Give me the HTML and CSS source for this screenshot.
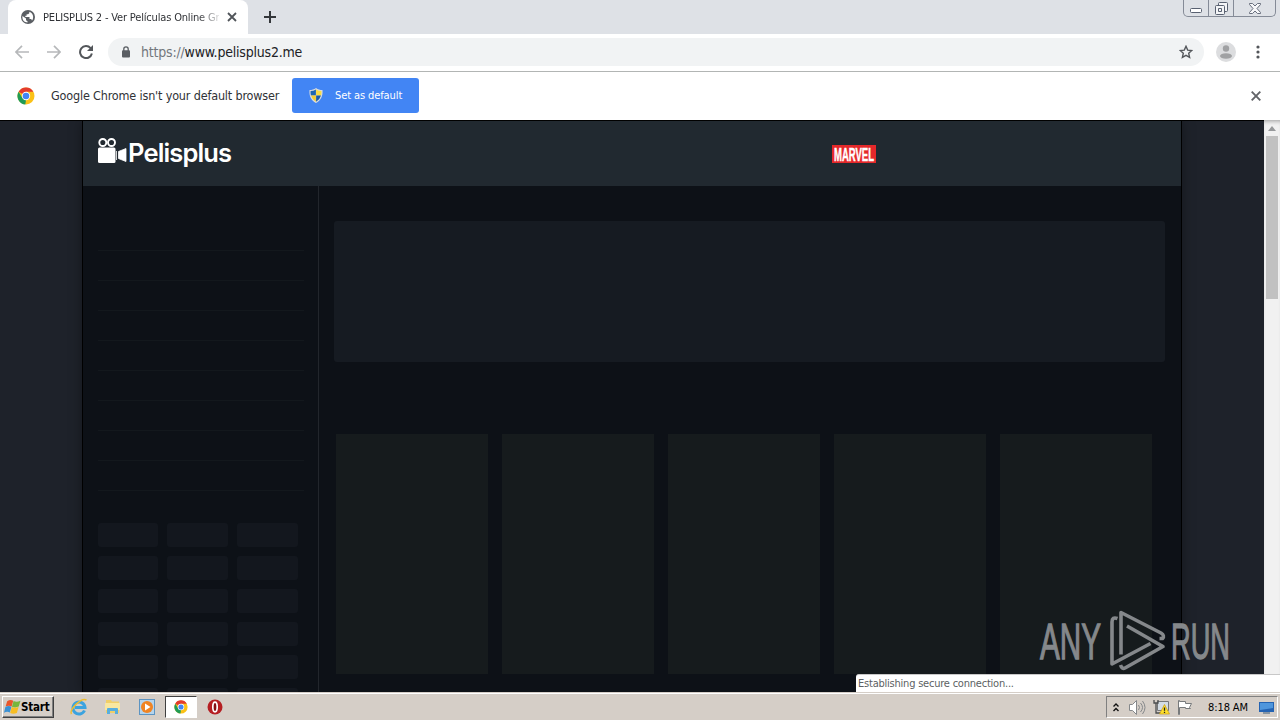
FILE: index.html
```html
<!DOCTYPE html>
<html lang="en">

<head>
  <meta charset="utf-8">
  <title>PELISPLUS 2 - Ver Películas Online Gratis</title>
  <link rel="stylesheet" href="styles.css">
</head>

<body>
  <svg class="defs" width="0" height="0">
    <symbol id="chrome" viewBox="0 0 18 18">
      <circle cx="9" cy="9" r="8.5" fill="#fbc116" />
      <path d="M9 9 1.6 4.7A8.5 8.5 0 0 1 16.4 4.8H9z" fill="#e33b2e" />
      <path d="M1.6 4.7 5.4 11 9 13 8.3 17.5A8.5 8.5 0 0 1 1.6 4.7z" fill="#209b55" />
      <circle cx="9" cy="9" r="4.2" fill="#fff" />
      <circle cx="9" cy="9" r="3.3" fill="#4285f4" />
    </symbol>
  </svg>
  <div class="screen">
    <div class="tabstrip">
      <div class="tab">
        <svg width="14" height="14" viewBox="0 0 14 14">
          <circle cx="7" cy="7" r="7" fill="#5a5e63" />
          <path d="M1.500 6 5 8.500v1.700l1.500 1v1.300C3.200 12.500.8 9.700 1.500 6zM8.300 1.700v1.500L7 4.300H5.600v1.500H4.300v1.300h4.200v2h1.700l.8 1.500c1.900-2.400 1.900-7.200-2.700-8.900z" fill="#fff" />
        </svg>
        <span class="tab-title">PELISPLUS 2 - Ver Películas Online Gr</span>
        <svg class="tab-close" width="10" height="10" viewBox="0 0 10 10">
          <path d="m1 1 8 8M9 1 1 9" stroke="#505459" stroke-width="1.8" />
        </svg>
      </div>
      <svg class="new-tab" width="12" height="12" viewBox="0 0 12 12">
        <path d="M6 0v12M0 6h12" stroke="#34373b" stroke-width="2" />
      </svg>
      <div class="window-buttons">
        <div class="wb min"><svg width="12" height="5" viewBox="0 0 12 5"><rect x=".5" y=".5" width="11" height="4" rx="1" fill="#fff" stroke="#596171" /></svg></div>
        <div class="wb restore"><svg width="13" height="13" viewBox="0 0 13 13"><g fill="#f4f5f7" stroke="#596171"><rect x="3.5" y=".5" width="9" height="9" rx="1" /><rect x=".5" y="3.5" width="9" height="9" rx="1" /><path d="M3.5 6.5h3v3h-3z" /></g></svg></div>
        <div class="wb close"><svg width="12" height="11" viewBox="0 0 12 11"><path d="M.5.5h3L6 3 8.500.5h3v1L8 5.500l3.500 4v1h-3L6 8l-2.500 2.500h-3v-1L4 5.500l-3.500-4z" fill="#f7f7f9" stroke="#596171" stroke-width=".9" /></svg></div>
      </div>
    </div>

    <div class="toolbar">
      <svg class="back" width="14" height="14" viewBox="0 0 14 14"><path d="M14 7H1.500M7 .8.9 7 7 13.200" fill="none" stroke="#b6b8ba" stroke-width="1.700" /></svg>
      <svg class="forward" width="14" height="14" viewBox="0 0 14 14"><path d="M0 7h12.500M7 .8 13.100 7 7 13.200" fill="none" stroke="#b6b8ba" stroke-width="1.700" /></svg>
      <svg class="reload" width="14" height="14" viewBox="0 0 14 14"><path d="M11.600 3.100A6 6 0 1 0 12.900 8.500" fill="none" stroke="#53565a" stroke-width="2" /><path d="M14 0v6H8z" fill="#53565a" /></svg>
      <div class="omnibox">
        <svg width="8" height="12" viewBox="0 0 8 12"><path d="M1.800 5V3a2.200 2.200 0 0 1 4.400 0v2" fill="none" stroke="#5a5e63" stroke-width="1.300" /><rect y="4.200" width="8" height="7.300" rx="1" fill="#5a5e63" /></svg>
        <span class="url"><span class="scheme">https://</span>www.pelisplus2.me</span>
        <svg class="star" width="14" height="14" viewBox="0 0 14 14"><path d="m7 1.300 1.700 3.800 4.100.4-3.100 2.800.9 4.100L7 10.300l-3.600 2.100.9-4.100L1.200 5.500l4.100-.4z" fill="none" stroke="#53565a" stroke-width="1.400" /></svg>
      </div>
      <svg class="avatar" width="20" height="20" viewBox="0 0 20 20"><circle cx="10" cy="10" r="10" fill="#dcdddf" /><circle cx="10" cy="6.500" r="3.200" fill="#a0a1a3" /><ellipse cx="10" cy="14" rx="6" ry="2.800" fill="#a0a1a3" /></svg>
      <svg class="menu" width="4" height="14" viewBox="0 0 4 14"><g fill="#53565a"><circle cx="2" cy="2" r="1.600" /><circle cx="2" cy="7" r="1.600" /><circle cx="2" cy="12" r="1.600" /></g></svg>
    </div>

    <div class="infobar">
      <svg width="18" height="18"><use href="#chrome" /></svg>
      <span class="info-text">Google Chrome isn't your default browser</span>
      <div class="set-default">
        <svg width="14" height="15" viewBox="0 0 14 15">
          <path d="M7 0C5 1.500 3 2 .5 2 0 8 2 12.500 7 15c5-2.500 7-7 6.500-13C11 2 9 1.500 7 0z" fill="#d9dce0" />
          <path d="M6.900 1.500Q4.500 3 1.600 3 1.300 5.500 1.900 7.500h5z" fill="#1d66b4" />
          <path d="M7.100 1.500Q9.500 3 12.400 3q.3 2.500-.3 4.500h-5z" fill="#f8dc45" />
          <path d="M2 7.500q1.200 4.200 4.900 6.200V7.500z" fill="#f3cd31" />
          <path d="M12 7.500q-1.200 4.200-4.900 6.200V7.500z" fill="#1b5ba6" />
        </svg>
        <span>Set as default</span>
      </div>
      <svg class="info-close" width="10" height="10" viewBox="0 0 10 10"><path d="m.7.7 8.600 8.600M9.300.7.7 9.300" stroke="#626468" stroke-width="1.900" /></svg>
    </div>

    <div class="viewport">
      <div class="page">
        <div class="site">
          <div class="site-header">
            <div class="logo">
              <svg width="29" height="26" viewBox="0 0 29 26">
                <g fill="none" stroke="#fff" stroke-width="1.900"><circle cx="4.800" cy="4.500" r="3.500" /><circle cx="13.500" cy="4.500" r="3.500" /></g>
                <rect y="9.500" width="17.500" height="15.500" rx="1.500" fill="#fff" />
                <path d="M18.500 13v9M28 10.500v13L20.500 20.500v-7z" fill="#fff" stroke="#fff" stroke-width=".8" />
              </svg>
              <span>Pelisplus</span>
            </div>
            <div class="marvel">
              <svg width="44" height="18" viewBox="0 0 44 18"><rect width="44" height="18" fill="#e5282a" /><text x="2" y="16" textLength="40" lengthAdjust="spacingAndGlyphs">MARVEL</text></svg>
            </div>
          </div>
          <div class="columns">
            <div class="sidebar">
              <ul class="genres">
                <li></li><li></li><li></li><li></li><li></li><li></li><li></li><li></li><li></li>
              </ul>
              <div class="years">
                <i></i><i></i><i></i>
                <i></i><i></i><i></i>
                <i></i><i></i><i></i>
                <i></i><i></i><i></i>
                <i></i><i></i><i></i>
                <i></i><i></i><i></i>
              </div>
            </div>
            <div class="main">
              <div class="banner"></div>
              <div class="posters">
                <div></div><div></div><div></div><div></div><div></div>
              </div>
            </div>
          </div>
        </div>
      </div>
      <div class="scrollbar">
        <svg width="8" height="5" viewBox="0 0 8 5"><path d="M4 0 8 5H0z" fill="#96989a" /></svg>
        <div class="thumb"></div>
      </div>
      <div class="watermark">
        <svg width="204" height="64" viewBox="0 0 204 64">
          <text x="2" y="47.200" textLength="61" lengthAdjust="spacingAndGlyphs" transform="scale(1 1.080)">ANY</text>
          <g fill="none" stroke="#85888b" stroke-width="3.600" stroke-linejoin="round">
            <path d="M79.500 10.500Q74 8.500 74 14v42l38.500-20.500" />
            <path d="M83 46.500V4.500L123 25q4 2.500 1.500 5.500h-3" />
            <path d="m89 18 36 20.500L87 60q-3 1.500-4.500-3" />
          </g>
          <text x="133" y="47.200" textLength="59" lengthAdjust="spacingAndGlyphs" transform="scale(1 1.080)">RUN</text>
        </svg>
      </div>
      <div class="status">Establishing secure connection...</div>
    </div>

    <div class="taskbar">
      <div class="start">
        <svg width="17" height="16" viewBox="0 0 16 15">
          <path d="M3 2q3-2 5.700-.5L7.200 7Q4.500 5.700 1.500 7z" fill="#e9562b" />
          <path d="M9 1.800q3 1.500 6.500-.2l-1.600 5.500q-3.300 1.500-6.400.1z" fill="#77b63c" />
          <path d="M1.300 7.400q3-1.400 5.700-.1l-1.500 5.400Q3 11.400 0 12.800z" fill="#3b91d4" />
          <path d="M7.300 7.600q3 1.400 6.400-.1l-1.600 5.600q-3.300 1.500-6.300.1z" fill="#f7bd23" />
        </svg>
        <span>Start</span>
      </div>
      <div class="launch">
        <svg width="18" height="18" viewBox="0 0 18 18">
          <path d="M14.500 12.500A6 6 0 1 1 15 9.500H5" fill="none" stroke="#3ba3df" stroke-width="3" />
          <path d="M1.500 16C-1 12 11-1 16.500 2" fill="none" stroke="#edbd32" stroke-width="1.500" />
        </svg>
        <svg width="18" height="18" viewBox="0 0 18 18">
          <path d="M2 2h5l1 1.500h7V15H2z" fill="#f0cf68" />
          <path d="M1 5h15v7H1z" fill="#f8e7a0" />
          <path d="M3 16v-5q0-1 1-1h9q1 0 1 1v5h-3v-3H6v3z" fill="#58aede" />
        </svg>
        <svg width="18" height="18" viewBox="0 0 18 18">
          <rect x="1.500" y="1.500" width="15" height="15" fill="#b5d4ec" stroke="#5c94c2" />
          <circle cx="9" cy="9" r="6" fill="#f08423" />
          <path d="m7 5.500 5.500 3.500L7 12.500z" fill="#fff" />
        </svg>
      </div>
      <div class="running"><svg width="14" height="14"><use href="#chrome" /></svg></div>
      <svg class="opera" width="16" height="16" viewBox="0 0 16 16"><circle cx="8" cy="8" r="7.500" fill="#b51e22" /><ellipse cx="8" cy="8" rx="2.200" ry="4.800" fill="#851014" stroke="#fff" stroke-width="1.700" /></svg>
      <div class="tray">
        <svg class="chevrons" width="6" height="9" viewBox="0 0 6 9"><path d="M.5 3.500 3 1l2.500 2.500M.5 8 3 5.500 5.500 8" fill="none" stroke="#111" stroke-width="1.400" /></svg>
        <svg class="speaker" width="17" height="15" viewBox="0 0 17 15"><g stroke="#85888b" fill="none"><path d="M.5 4.500h3l4-4v14l-4-4h-3z" fill="#fff" /><path d="M9.500 5q2 2.500 0 5M11.500 3q4 4.500 0 9M13.500 1q5 6.500 0 13" /></g></svg>
        <svg class="network" width="17" height="16" viewBox="0 0 17 16">
          <path d="M4.500 2.500h11v9h-11z" fill="#d3dce5" stroke="#74777a" />
          <path d="M1 1v3h4V1M3 4v10h5" fill="none" stroke="#4b4e50" stroke-width="1.300" />
          <path d="m11.500 5.500 5 9.500h-10z" fill="#ffe12c" stroke="#c99b13" stroke-width=".7" />
          <path d="M11.500 8.500v3.200m0 1v1.300" stroke="#222" stroke-width="1.300" />
        </svg>
        <svg class="flag" width="16" height="15" viewBox="0 0 16 15"><path d="M1.500 14.500v-14h1v1h6v2h6l-2 4 1 1H8.500v-1h-6v7z" fill="#fff" stroke="#777a7c" /></svg>
        <span class="clock">8:18 AM</span>
        <svg class="desktop" width="15" height="13" viewBox="0 0 15 13"><path d="M0 1h15v10H0z" fill="#2463b2" /><path d="M1 2h13v5L1 9z" fill="#4f96dc" /><path d="M4 12h7" stroke="#385a7b" /></svg>
      </div>
    </div>
  </div>
</body>

</html>
```
FILE: styles.css
```css
* {
  box-sizing: border-box;
}

body {
  margin: 0;
  overflow: hidden;
  font-family: "DejaVu Sans Condensed", "DejaVu Sans", sans-serif;
  font-stretch: condensed;
  color: #303236;
}

svg {
  display: block;
  flex: none;
}

.defs {
  position: absolute;
}

.screen {
  width: 1280px;
  height: 720px;
  display: flex;
  flex-direction: column;
  white-space: nowrap;
}

/* browser chrome */
.tabstrip {
  height: 34px;
  flex: none;
  display: flex;
  background: #dee1e6;
  padding-left: 8px;
}

.tab {
  width: 240px;
  background: #fff;
  border-radius: 8px 8px 0 0;
  display: flex;
  align-items: center;
  padding: 0 11px 0 13px;
}

.tab-title {
  width: 176px;
  margin-left: 8px;
  font-size: 11px;
  letter-spacing: -0.17px;
  -webkit-mask-image: linear-gradient(to right, #000 155px, transparent 180px);
  mask-image: linear-gradient(to right, #000 155px, transparent 180px);
}

.tab-close {
  margin-left: auto;
}

.new-tab {
  margin: 11px 0 0 16px;
}

.window-buttons {
  display: flex;
  height: 17px;
  margin: 0 4px 0 auto;
  border: 1px solid #858b97;
  border-top: none;
  border-radius: 0 0 5px 5px;
}

.wb {
  width: 25px;
  border-right: 1px solid #858b97;
  display: flex;
  justify-content: center;
  align-items: center;
}

.wb.min {
  padding-top: 4px;
}

.wb.close {
  width: 41px;
  border: none;
}

.toolbar {
  height: 38px;
  flex: none;
  display: flex;
  align-items: center;
  background: #fff;
  border-bottom: 1px solid #b2b5b4;
  padding: 0 20px 2px 15px;
}

.forward,
.reload {
  margin-left: 18px;
}

.omnibox {
  width: 1096px;
  height: 28px;
  margin-left: 15px;
  border-radius: 14px;
  background: #f1f3f4;
  display: flex;
  align-items: center;
  padding: 0 11px 0 14px;
}

.url {
  margin-left: 11px;
  font-size: 14px;
  letter-spacing: -0.2px;
  color: #202124;
}

.scheme {
  color: #73777c;
}

.star {
  margin-left: auto;
}

.avatar {
  margin-left: 12px;
}

.menu {
  margin-left: auto;
}

.infobar {
  height: 48px;
  flex: none;
  display: flex;
  align-items: center;
  background: #fff;
  padding: 0 19px 0 17px;
}

.info-text {
  width: 241px;
  margin: 0 0 2px 16px;
  font-size: 12.5px;
  letter-spacing: -0.17px;
}

.set-default {
  width: 127px;
  height: 35px;
  margin-bottom: 2px;
  background: #4285f4;
  border-radius: 3px;
  color: #fff;
  display: flex;
  align-items: center;
  gap: 12px;
  padding-left: 17px;
  font-size: 11px;
  letter-spacing: -0.1px;
}

.info-close {
  margin-left: auto;
}

/* web page */
.viewport {
  height: 572px;
  flex: none;
  display: flex;
  position: relative;
  overflow: hidden;
}

.page {
  width: 1264px;
  background: #1e222a;
  border-top: 1px solid #000;
  padding-left: 82px;
}

.site {
  width: 1100px;
  height: 571px;
  background: #0d1117;
  border: solid #000;
  border-width: 0 1px;
  box-shadow: 0 0 12px rgba(0, 0, 0, .35);
}

.site-header {
  height: 65px;
  background: #212930;
  display: flex;
  align-items: center;
  padding: 0 305px 0 15px;
}

.logo {
  display: flex;
  align-items: center;
  color: #fff;
  font: 600 25.5px Inter, sans-serif;
  letter-spacing: -0.85px;
  padding-bottom: 2px;
  gap: 1px;
}

.logo svg {
  margin-bottom: 3px;
}

.marvel {
  margin-left: auto;
}

.marvel text {
  fill: #fff;
  stroke: #fff;
  stroke-width: .5px;
  font: bold 19px "Liberation Sans", sans-serif;
}

.columns {
  display: flex;
  height: 506px;
}

.sidebar {
  width: 236px;
  border-right: 1px solid #22262c;
  padding: 35px 14px 0 15px;
  overflow: hidden;
}

.genres {
  list-style: none;
  margin: 0 0 32px;
  padding: 0;
}

.genres li {
  height: 30px;
  border-bottom: 1px solid #13181d;
}

.years {
  display: grid;
  grid-template-columns: 60px 61px 61px;
  grid-auto-rows: 24px;
  gap: 9px;
}

.years i {
  background: #13171e;
  border-radius: 3px;
}

.main {
  padding: 35px 15px 0;
}

.banner {
  width: 831px;
  height: 141px;
  background: #161b22;
  border-radius: 3px;
}

.posters {
  display: flex;
  gap: 14px;
  padding: 72px 0 0 2px;
}

.posters div {
  width: 152px;
  height: 240px;
  background: #161b1d;
}

.scrollbar {
  width: 16px;
  background: #f1f1f1;
  display: flex;
  flex-direction: column;
  align-items: center;
  padding-top: 6px;
  box-shadow: inset 0 4px 4px -3px #999;
}

.thumb {
  width: 12px;
  height: 163px;
  margin-top: 5px;
  background: #c1c1c1;
}

.watermark {
  position: absolute;
  left: 1038px;
  top: 488px;
}

.watermark text {
  fill: #85888b;
  stroke: #85888b;
  stroke-width: 1.2px;
  font: 47px "Liberation Sans", sans-serif;
}

.status {
  position: absolute;
  right: 0;
  bottom: 0;
  width: 424px;
  height: 18px;
  background: #fff;
  border-top: 1px solid #c8c8c8;
  border-radius: 3px 0 0 0;
  padding-left: 2px;
  font-size: 11px;
  letter-spacing: -0.22px;
  line-height: 17px;
  color: #5c5f63;
}

/* taskbar */
.taskbar {
  height: 28px;
  flex: none;
  display: flex;
  align-items: center;
  background: #d5cec7;
  border-top: 1px solid #d5cec7;
  box-shadow: inset 0 1px #fff;
  padding: 1px 2px 0;
}

.start {
  width: 52px;
  height: 22px;
  display: flex;
  align-items: center;
  border: 1px solid;
  border-color: #fff #404040 #404040 #fff;
  box-shadow: inset -1px -1px #808080;
  padding-left: 1px;
  color: #000;
  font-weight: bold;
  font-size: 11.5px;
  letter-spacing: -0.2px;
}

.launch {
  display: flex;
  gap: 16px;
  margin-left: 16px;
}

.running {
  width: 32px;
  height: 22px;
  margin: 0 10px 0 9px;
  display: flex;
  align-items: center;
  justify-content: center;
  background: #fff;
  border: 1px solid;
  border-color: #404040 #fff #fff #404040;
}

.tray {
  width: 172px;
  height: 22px;
  margin-left: auto;
  display: flex;
  align-items: center;
  border: 1px solid;
  border-color: #808080 #fff #fff #808080;
  padding-left: 6px;
  color: #000;
  font-size: 11px;
}

.speaker {
  margin-left: 10px;
}

.network {
  margin-left: 7px;
}

.flag {
  margin-left: 7px;
}

.clock {
  width: 42px;
  margin-left: 15px;
  letter-spacing: -0.1px;
}

.desktop {
  margin-left: 9px;
}
```
